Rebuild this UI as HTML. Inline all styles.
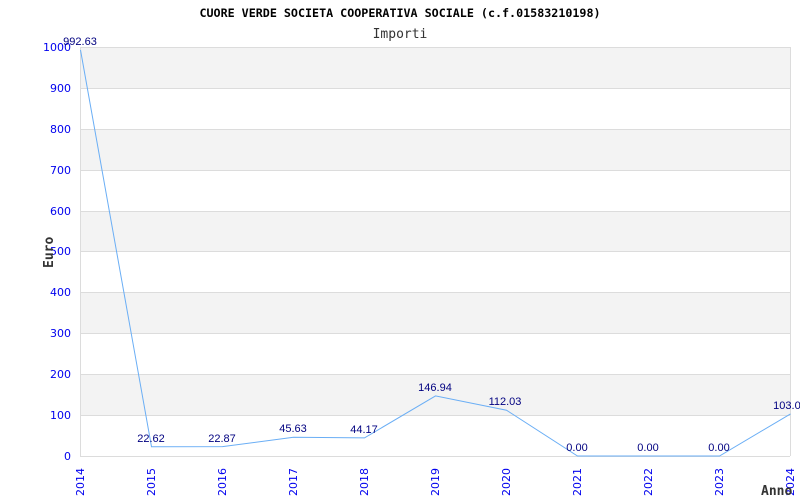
<!DOCTYPE html>
<html><head><style>body{margin:0;background:#fff}svg{display:block}</style></head><body>
<svg width="800" height="500" xmlns="http://www.w3.org/2000/svg" font-family="Liberation Sans, sans-serif">
<text x="400" y="17" text-anchor="middle" font-family="DejaVu Sans Mono, monospace" font-size="11.7" font-weight="bold" fill="#000">CUORE VERDE SOCIETA COOPERATIVA SOCIALE (c.f.01583210198)</text>
<text x="400" y="38" text-anchor="middle" font-family="DejaVu Sans Mono, monospace" font-size="13" fill="#333">Importi</text>
<g fill="#f3f3f3">
<rect x="80" y="47" width="710" height="41"/><rect x="80" y="129" width="710" height="41"/><rect x="80" y="211" width="710" height="41"/><rect x="80" y="292" width="710" height="41"/><rect x="80" y="374" width="710" height="41"/>
</g>
<g stroke="#dcdcdc" stroke-width="1">
<line x1="80" y1="47.5" x2="790" y2="47.5"/><line x1="80" y1="88.5" x2="790" y2="88.5"/><line x1="80" y1="129.5" x2="790" y2="129.5"/><line x1="80" y1="170.5" x2="790" y2="170.5"/><line x1="80" y1="211.5" x2="790" y2="211.5"/><line x1="80" y1="251.5" x2="790" y2="251.5"/><line x1="80" y1="292.5" x2="790" y2="292.5"/><line x1="80" y1="333.5" x2="790" y2="333.5"/><line x1="80" y1="374.5" x2="790" y2="374.5"/><line x1="80" y1="415.5" x2="790" y2="415.5"/>
<line x1="80.5" y1="47" x2="80.5" y2="456"/><line x1="790.5" y1="47" x2="790.5" y2="456"/><line x1="80" y1="456.5" x2="790" y2="456.5"/>
</g>
<g fill="#0000ee" font-size="11" font-family="DejaVu Sans, sans-serif" text-anchor="end">
<text x="71" y="51">1000</text><text x="71" y="92">900</text><text x="71" y="133">800</text><text x="71" y="174">700</text><text x="71" y="215">600</text><text x="71" y="255">500</text><text x="71" y="296">400</text><text x="71" y="337">300</text><text x="71" y="378">200</text><text x="71" y="419">100</text><text x="71" y="460">0</text>
</g>
<g fill="#0000ee" font-size="11" font-family="DejaVu Sans, sans-serif" text-anchor="end">
<text transform="translate(84,468) rotate(-90)">2014</text>
<text transform="translate(155,468) rotate(-90)">2015</text>
<text transform="translate(226,468) rotate(-90)">2016</text>
<text transform="translate(297,468) rotate(-90)">2017</text>
<text transform="translate(368,468) rotate(-90)">2018</text>
<text transform="translate(439,468) rotate(-90)">2019</text>
<text transform="translate(510,468) rotate(-90)">2020</text>
<text transform="translate(581,468) rotate(-90)">2021</text>
<text transform="translate(652,468) rotate(-90)">2022</text>
<text transform="translate(723,468) rotate(-90)">2023</text>
<text transform="translate(794,468) rotate(-90)">2024</text>
</g>
<text transform="translate(53,268) rotate(-90)" font-family="DejaVu Sans Mono, monospace" font-size="13" font-weight="bold" fill="#333">Euro</text>
<text x="761" y="495" font-family="DejaVu Sans Mono, monospace" font-size="13" font-weight="bold" fill="#333">Anno</text>
<polyline fill="none" stroke="#6aaef5" stroke-width="1" points="80.5,50 151.5,446.7 222.5,446.6 293.5,437.3 364.5,437.9 435.5,395.9 506.5,410.2 577.5,456 648.5,456 719.5,456 790.5,413.9"/>
<g fill="#000080" font-size="11" text-anchor="middle">
<text x="80" y="45">992.63</text>
<text x="151" y="442">22.62</text>
<text x="222" y="442">22.87</text>
<text x="293" y="432">45.63</text>
<text x="364" y="433">44.17</text>
<text x="435" y="391">146.94</text>
<text x="505" y="405">112.03</text>
<text x="577" y="451">0.00</text>
<text x="648" y="451">0.00</text>
<text x="719" y="451">0.00</text>
<text x="790" y="409">103.00</text>
</g>
</svg>
</body></html>
